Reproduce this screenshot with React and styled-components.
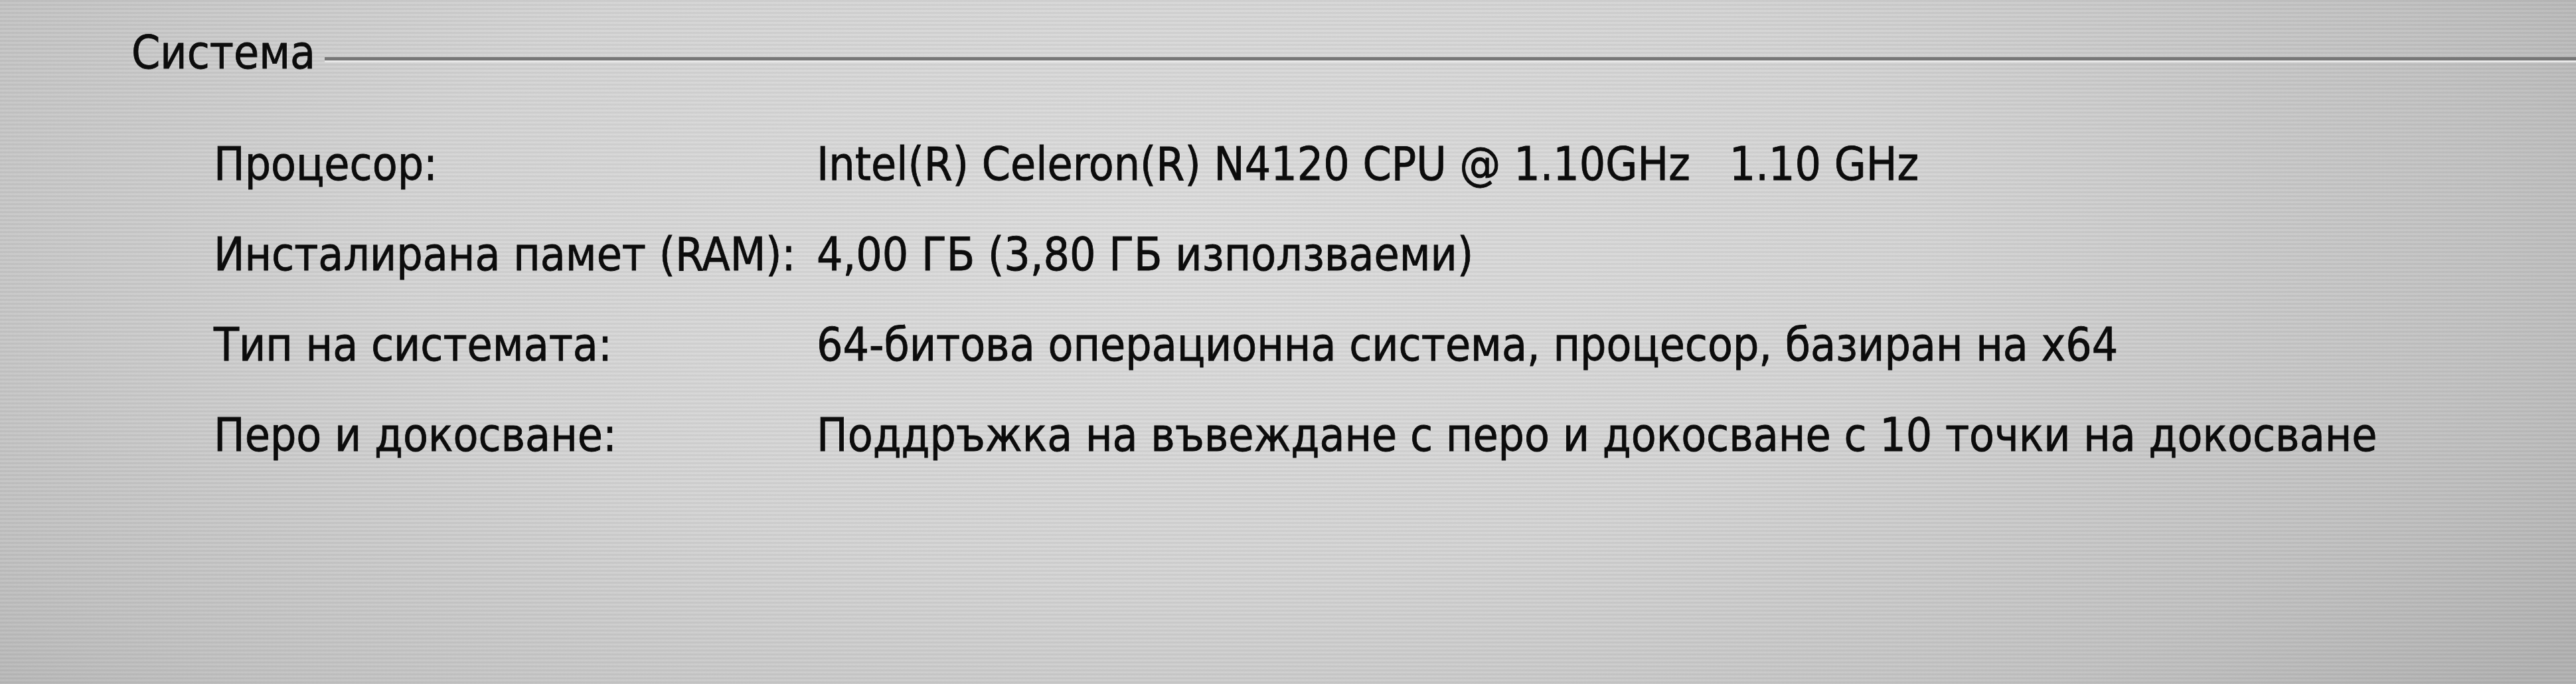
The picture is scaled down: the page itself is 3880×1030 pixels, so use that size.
import React from 'react';
import styled, { createGlobalStyle } from 'styled-components';

const GlobalStyle = createGlobalStyle`
  html, body {
    margin: 0;
    padding: 0;
  }
  body {
    width: 3880px;
    height: 1030px;
    overflow: hidden;
    background:
      repeating-linear-gradient(180deg, rgba(0, 0, 0, 0.04) 0 3px, rgba(255, 255, 255, 0.04) 3px 6px),
      radial-gradient(ellipse 65% 110% at 45% 35%, #dddddd 0%, #d4d4d4 45%, #c2c2c2 80%, #b2b2b2 100%);
  }
`;

const Panel = styled.section`
  width: 3880px;
  height: 1030px;
  box-sizing: border-box;
  padding: 44px 0 0 198px;
  font-family: 'DejaVu Sans Condensed', 'DejaVu Sans', sans-serif;
  font-stretch: condensed;
  font-size: 69px;
  color: #0c0c0c;
  -webkit-text-stroke: 0.8px #0c0c0c;
`;

const Header = styled.div`
  display: flex;
  align-items: center;
  height: 70px;
`;

const Title = styled.h2`
  margin: 0;
  font-size: inherit;
  font-weight: normal;
  line-height: 70px;
`;

const Rule = styled.div`
  flex: 1;
  margin: 22px 0 0 14px;
  border-top: 5px solid #777;
  border-bottom: 3px solid #e8e8e8;
`;

const Rows = styled.dl`
  display: grid;
  grid-template-columns: 908px auto;
  grid-auto-rows: 136px;
  align-items: center;
  margin: 65px 0 0 124px;
`;

const Label = styled.dt`
  margin: 0;
  white-space: nowrap;
`;

const Value = styled.dd`
  margin: 0;
  white-space: pre;
`;

const specs = [
  ['Процесор:', 'Intel(R) Celeron(R) N4120 CPU @ 1.10GHz   1.10 GHz'],
  ['Инсталирана памет (RAM):', '4,00 ГБ (3,80 ГБ използваеми)'],
  ['Тип на системата:', '64-битова операционна система, процесор, базиран на x64'],
  ['Перо и докосване:', 'Поддръжка на въвеждане с перо и докосване с 10 точки на докосване'],
];

const App = () => (
  <>
    <GlobalStyle />
    <Panel>
      <Header>
        <Title>Система</Title>
        <Rule />
      </Header>
      <Rows>
        {specs.map(([label, value]) => (
          <React.Fragment key={label}>
            <Label>{label}</Label>
            <Value>{value}</Value>
          </React.Fragment>
        ))}
      </Rows>
    </Panel>
  </>
);

export default App;
